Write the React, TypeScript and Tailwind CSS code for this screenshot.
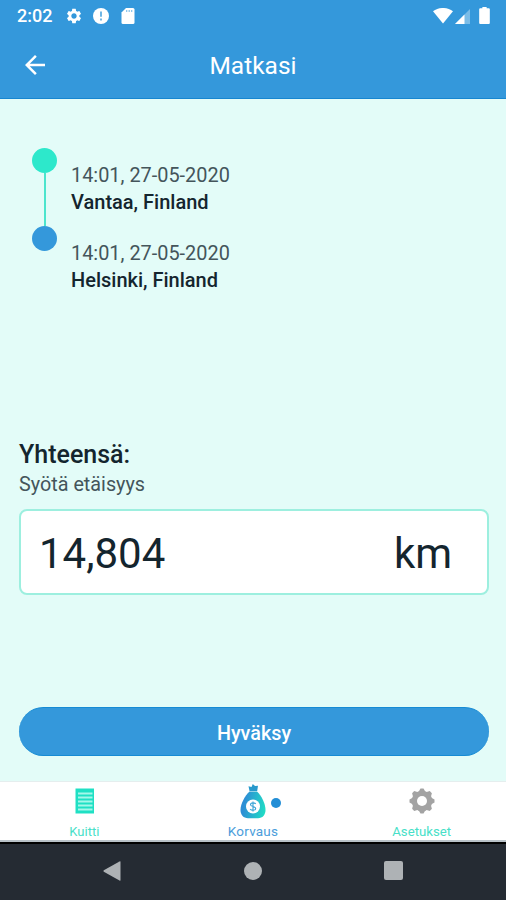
import React from 'react';
import { MdArrowBack, MdSettings } from 'react-icons/md';

interface Stop {
    time: string;
    place: string;
}

const stops: Stop[] = [
    { time: '14:01, 27-05-2020', place: 'Vantaa, Finland' },
    { time: '14:01, 27-05-2020', place: 'Helsinki, Finland' }
];

const StatusBar: React.FC = () => (
    <div className="flex h-8 items-center pl-[17px] pr-[16px] text-white">
        <span className="w-[48px] text-[18px] leading-none font-medium">2:02</span>
        <MdSettings className="size-[18px]" />
        <svg viewBox="0 0 16 16" className="ml-[10px] size-[16px]">
            <circle cx="8" cy="8" r="8" fill="currentColor" />
            <path d="M8 3.6v5.2M8 10.6v1.8" stroke="#3498db" strokeWidth="1.4" />
        </svg>
        <svg viewBox="0 0 13 16" className="ml-[12px] h-[16px] w-[14px]">
            <path d="M4.5 0H11.5Q13 0 13 1.5V14.5Q13 16 11.5 16H1.5Q0 16 0 14.5V4.5Z" fill="currentColor" />
            <path d="M5.2 2v2M7.7 2v2M10.2 2v2" stroke="#3498db" strokeWidth="1.2" opacity="0.6" />
        </svg>
        <svg viewBox="0 0 20 16" className="ml-auto h-[16px] w-[20px]">
            <path d="M0 3.2C5.5-1.1 14.5-1.1 20 3.2L10 15.5Z" fill="currentColor" />
        </svg>
        <svg viewBox="0 0 15 15" className="ml-[2px] size-[15px]">
            <path d="M0 15L15 0V15Z" fill="currentColor" opacity="0.35" />
            <path d="M0 15L9.5 5.5V15Z" fill="currentColor" />
        </svg>
        <svg viewBox="0 0 10 16" className="ml-[9px] mb-px h-[17px] w-[11px]">
            <path d="M3 0H7V1.2H9Q10 1.2 10 2.2V15Q10 16 9 16H1Q0 16 0 15V2.2Q0 1.2 1 1.2H3Z" fill="currentColor" />
        </svg>
    </div>
);

const ReceiptIcon: React.FC = () => (
    <svg viewBox="0 0 20 26" className="ml-px h-[26px] w-[20px]">
        <path d="M.5 .5H19V25.5H.5Z" fill="#1fe0c4" />
        <path d="M3 5.5H17.5M3 9.5H17.5M3 13.5H17.5M3 17.5H17.5M3 21.5H17.5" stroke="#a4f7e9" strokeWidth="1.8" />
    </svg>
);

const MoneyBagIcon: React.FC = () => (
    <svg viewBox="0 0 26 35" className="h-[35px] w-[26px]">
        <defs>
            <linearGradient id="bag" x1="0" y1="0.4" x2="1" y2="0.6">
                <stop offset="0.15" stopColor="#2d8fd5" />
                <stop offset="1" stopColor="#20dcc5" />
            </linearGradient>
        </defs>
        <path d="M8.5 2.2L11.5 3L12.8 0L15 2L18 1.8L17.2 7H9.5Z" fill="#2799cc" />
        <path d="M9.5 7.5H17C21.5 12 25.5 19.500 25.500 25.800C25.500 31.200 22.500 34.200 18 34.200H8C3.500 34.200 .5 31.200 .5 25.800C.5 19.500 5 12 9.500 7.500Z" fill="url(#bag)" />
        <circle cx="13" cy="22.500" r="7" fill="#fff" />
        <path d="M15.700 20C15 18.500 10.500 18.300 10.500 20.700C10.500 22.900 15.700 22.200 15.700 24.500C15.700 26.900 11 26.600 10.200 25M13 17.500V27.600" fill="none" stroke="#3aa4d6" strokeWidth="1.100" />
    </svg>
);

const GearIcon: React.FC = () => (
    <svg viewBox="0 0 26 26" className="size-[26px]">
        <g fill="#a3a3a3">
            {[0, 45, 90, 135].map((angle) => (
                <path
                    key={angle}
                    d="M11.500 .5H14.500L16.500 4V22L14.500 25.500H11.500L9.500 22V4Z"
                    transform={`rotate(${angle} 13 13)`}
                />
            ))}
            <circle cx="13" cy="13" r="10.300" />
        </g>
        <circle cx="13" cy="13" r="5" fill="#fff" />
    </svg>
);

const App: React.FC = () => {
    return (
        <div className="flex h-[900px] w-[506px] flex-col overflow-hidden bg-[#e3fcf8] font-[Roboto,sans-serif] text-[#14252e]">
            <header className="h-[99px] shrink-0 border-b border-[#1686d1] bg-[#3498db] text-white">
                <StatusBar />
                <div className="grid h-[66px] grid-cols-[70px_1fr_70px] items-center">
                    <MdArrowBack className="ml-[20px] size-[30px]" />
                    <h1 className="pt-[3px] text-center text-[24.5px] leading-none">Matkasi</h1>
                </div>
            </header>

            <main className="flex flex-1 flex-col px-[18px]">
                {/* Route timeline */}
                <div className="mt-[49px] flex pl-[14px]">
                    <div className="flex w-[25px] flex-col items-center">
                        <div className="size-[25px] rounded-full bg-[#2de8cb]" />
                        <div className="h-[53px] w-[2px] bg-[#4ce5cd]" />
                        <div className="size-[25px] rounded-full bg-[#3498db]" />
                    </div>
                    <div className="ml-[14px] mt-[14px]">
                        {stops.map((stop) => (
                            <div key={stop.place} className="h-[78px]">
                                <div className="text-[19.9px] leading-[27px] text-[#44555b]">{stop.time}</div>
                                <div className="text-[20px] leading-[27px] font-medium">{stop.place}</div>
                            </div>
                        ))}
                    </div>
                </div>

                {/* Distance */}
                <section className="mt-[121px]">
                    <h2 className="pl-px text-[25px] leading-[32px] font-medium">Yhteensä:</h2>
                    <p className="pl-px text-[19.8px] leading-[28px] text-[#44555b]">Syötä etäisyys</p>
                    <div className="ml-px mt-[10px] flex h-[86px] w-[470px] items-center justify-between rounded-[8px] border-2 border-[#9defdf] bg-white pl-[18px] pr-[35px] pt-[3px] text-[42px]">
                        <span>14,804</span>
                        <span>km</span>
                    </div>
                </section>

                <button
                    type="button"
                    className="ml-px mt-auto mb-[25px] h-[49px] w-[470px] rounded-full border-y border-[#168bd4] bg-[#3498db] pt-[4px] text-[19.8px] font-medium text-white"
                >
                    Hyväksy
                </button>
            </main>

            <nav className="grid h-[61px] shrink-0 grid-cols-3 border-t border-[#e5eeee] border-b-2 border-b-[#b9c2c8] bg-white text-[13px]">
                <div className="flex flex-col items-center justify-between pt-[6px] text-[#48dfc8]">
                    <ReceiptIcon />
                    <span className="leading-[17px]">Kuitti</span>
                </div>
                <div className="relative flex flex-col items-center justify-between pt-[2px] text-[#4b9ddb]">
                    <MoneyBagIcon />
                    <span className="absolute left-[102px] top-[16px] size-[10px] rounded-full bg-[#238ed6]" />
                    <span className="text-[13.5px] leading-[17px] tracking-[0.2px]">Korvaus</span>
                </div>
                <div className="flex flex-col items-center justify-between pt-[6px] text-[#48dfc8]">
                    <GearIcon />
                    <span className="text-[13.2px] leading-[17px]">Asetukset</span>
                </div>
            </nav>

            <footer className="grid h-[58px] shrink-0 grid-cols-[1fr_56px_1fr] items-center border-t-2 border-black bg-[#252b33] pb-[3px] text-[#aeb2b5]">
                <svg viewBox="0 0 18 20" className="ml-[103px] h-[20px] w-[18px]">
                    <path d="M17.5 .8V19.2Q17.5 20 16.5 19.5L.8 10.7Q0 10 .8 9.3L16.5 .5Q17.5 0 17.5 .8Z" fill="currentColor" />
                </svg>
                <div className="mx-auto size-[18px] rounded-full bg-[#aeb2b5]" />
                <div className="ml-[103px] size-[19px] rounded-[2px] bg-[#aeb2b5]" />
            </footer>
        </div>
    );
};

export default App;
